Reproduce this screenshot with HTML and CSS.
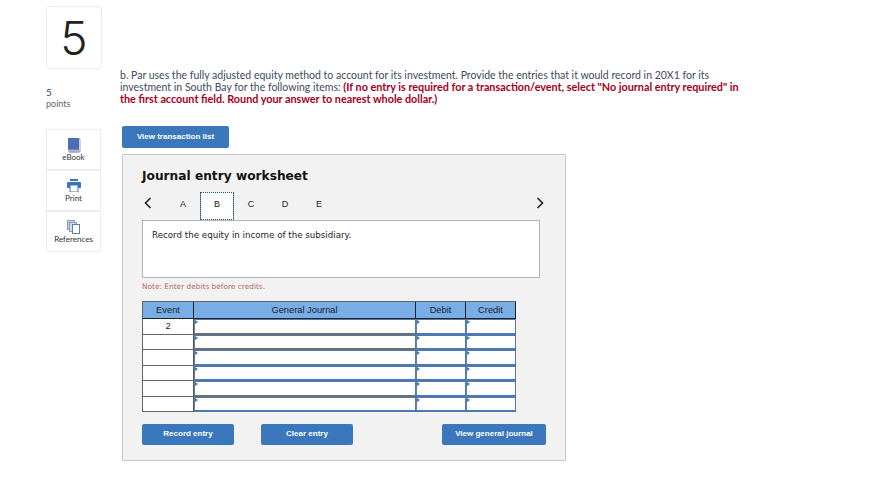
FILE: index.html
```html
<!DOCTYPE html>
<html lang="en">
<head>
    <meta charset="UTF-8">
    <title>Journal entry worksheet</title>
    <link rel="stylesheet" href="styles.css">
</head>
<body>
    <div class="page">
        <div class="sidebar">
            <div class="qnum">5</div>
            <div class="points"><b>5</b><span>points</span></div>
            <div class="tools">
                <div class="tool tool-book">
                    <svg width="14" height="15" viewBox="0 0 14 15"><rect x="1" y="0" width="11" height="12" fill="#4a6fb5"/><path d="M1 12h11v1H2v1h10M12 1h1v13H2" fill="none" stroke="#9aa0b4"/></svg>
                    <span>eBook</span>
                </div>
                <div class="tool">
                    <svg width="14" height="13" viewBox="0 0 14 13"><rect x="3" y="0" width="8" height="2" fill="#3a75bb"/><rect x="0" y="3" width="14" height="6" rx="1" fill="#3a75bb"/><rect x="3" y="6" width="8" height="7" fill="#fff" stroke="#3a75bb"/></svg>
                    <span>Print</span>
                </div>
                <div class="tool tool-refs">
                    <svg width="13" height="14" viewBox="0 0 13 14"><rect x="0.5" y="0.5" width="7" height="9" fill="#c3cbe6" stroke="#8f9cc4"/><rect x="2.5" y="2.5" width="7" height="9" fill="#d5dbef" stroke="#8f9cc4"/><rect x="5.5" y="4.5" width="7" height="9" fill="#fff" stroke="#5b7fae"/></svg>
                    <span>References</span>
                </div>
            </div>
        </div>

        <div class="main">
            <p class="prompt">b. Par uses the fully adjusted equity method to account for its investment. Provide the entries that it would record in 20X1 for its investment in South Bay for the following items: <strong>(If no entry is required for a transaction/event, select "No journal entry required" in the first account field. Round your answer to nearest whole dollar.)</strong></p>
            <button class="btn btn-list">View transaction list</button>

            <div class="worksheet">
                <h2>Journal entry worksheet</h2>
                <div class="tabs">
                    <svg class="chev" width="8" height="12" viewBox="0 0 8 12"><path d="M6.5 1L1.5 6l5 5" fill="none" stroke="#222" stroke-width="1.6"/></svg>
                    <div class="tab-list">
                        <span class="tab">A</span>
                        <span class="tab active">B</span>
                        <span class="tab">C</span>
                        <span class="tab">D</span>
                        <span class="tab">E</span>
                    </div>
                    <svg class="chev" width="8" height="12" viewBox="0 0 8 12"><path d="M1.5 1l5 5-5 5" fill="none" stroke="#222" stroke-width="1.6"/></svg>
                </div>
                <div class="record">Record the equity in income of the subsidiary.</div>
                <div class="note">Note: Enter debits before credits.</div>

                <div class="journal">
                    <div class="th">Event</div><div class="th">General Journal</div><div class="th">Debit</div><div class="th">Credit</div>

                    <div class="ev">2</div><div class="in grey"></div><div class="in"></div><div class="in"></div>
                    <div class="ev"></div><div class="in grey"></div><div class="in"></div><div class="in"></div>
                    <div class="ev"></div><div class="in"></div><div class="in"></div><div class="in"></div>
                    <div class="ev"></div><div class="in"></div><div class="in"></div><div class="in"></div>
                    <div class="ev"></div><div class="in grey"></div><div class="in"></div><div class="in"></div>
                    <div class="ev"></div><div class="in"></div><div class="in"></div><div class="in"></div>
                </div>

                <div class="actions">
                    <button class="btn btn-entry">Record entry</button>
                    <button class="btn btn-entry">Clear entry</button>
                    <button class="btn btn-view">View general journal</button>
                </div>
            </div>
        </div>
    </div>
</body>
</html>
```
FILE: styles.css
```css
* { box-sizing: border-box; }

body {
    margin: 0;
    background: #fff;
    color: #333;
    font-family: "Lato", sans-serif;
}

.page {
    display: flex;
    padding: 6px 0 0 46px;
}

.sidebar {
    width: 56px;
    margin-right: 18px;
    flex-shrink: 0;
}

.qnum {
    width: 56px;
    height: 63px;
    border: 1px solid #ececec;
    border-radius: 4px;
    display: flex;
    align-items: center;
    justify-content: center;
    font-size: 46px;
    color: #222;
    font-family: "Inter", sans-serif;
    font-weight: 300;
}

.points {
    margin-top: 18px;
    font-size: 9px;
    line-height: 11px;
    color: #666;
}

.points b {
    display: block;
    font-size: 10px;
    font-weight: 400;
    color: #2b4a78;
}

.tools {
    margin-top: 20px;
    width: 55px;
}

.tool {
    height: 41px;
    border: 1px solid #ececec;
    display: flex;
    flex-direction: column;
    align-items: center;
    padding-top: 8px;
    font-size: 8px;
    line-height: 10px;
    color: #333;
    gap: 1px;
}

.tool:last-child { border-radius: 0 0 3px 3px; }
.tool-book svg { margin-bottom: -2px; }
.tool-refs svg { margin-bottom: -1px; }

.main {
    width: 640px;
    padding-top: 63px;
}

.prompt {
    margin: 0;
    font-size: 10.5px;
    line-height: 12px;
    width: 625px;
    color: #3d4a5c;
}

.prompt strong {
    color: #a4001d;
    font-size: 10.8px;
    line-height: 12px;
    font-weight: 700;
}

.btn {
    background: #3b77bc;
    color: #fff;
    border: none;
    border-radius: 2px;
    font-family: "Liberation Sans", sans-serif;
    font-size: 8px;
    font-weight: 700;
    padding: 0 0 2px;
}

.btn-list {
    display: block;
    width: 107px;
    height: 22px;
    margin: 21px 0 6px 2px;
}

.worksheet {
    width: 444px;
    height: 307px;
    margin-left: 2px;
    background: #f2f2f2;
    border: 1px solid #c8c8c8;
    padding: 13px 19px 0 19px;
    font-family: "DejaVu Sans", sans-serif;
}

.worksheet h2 {
    margin: 0;
    font-size: 12.2px;
    line-height: 17px;
    color: #111;
    font-weight: 700;
}

.tabs {
    display: flex;
    align-items: center;
    justify-content: space-between;
    width: 403px;
    height: 28px;
    margin-top: 7px;
    padding: 0 1px 0 2px;
}

.tabs .chev { margin-top: -7px; }

.tab-list {
    display: flex;
    flex: 1;
    margin-left: 14px;
    height: 28px;
}

.tab {
    width: 34px;
    font-family: "Liberation Sans", sans-serif;
    font-size: 9px;
    line-height: 24px;
    text-align: center;
    color: #222;
}

.tab.active {
    background: #fff;
    outline: 1px dotted #1f4f8a;
    outline-offset: -1px;
    border-left: 1px solid #999;
    border-right: 1px solid #999;
}

.record {
    width: 398px;
    height: 58px;
    background: #fff;
    border: 1px solid #b5b5b5;
    padding: 8px 9px;
    font-size: 8.7px;
    line-height: 13px;
    color: #222;
}

.note {
    margin-top: 4px;
    font-size: 7.4px;
    line-height: 10px;
    color: #b5696a;
}

.journal {
    display: grid;
    grid-template-columns: 52px 222px 50px 50px;
    grid-template-rows: 17px repeat(6, 15.5px);
    width: 374px;
    margin-top: 9px;
    border-top: 1px solid #666;
    font-family: "Liberation Sans", sans-serif;
    font-size: 9.3px;
}

.th {
    background: #78ade6;
    color: #222;
    text-align: center;
    line-height: 16px;
    border-right: 1px solid #222;
    border-bottom: 1px solid #222;
}

.th:first-child { border-left: 1px solid #666; }

.ev {
    background: #fff;
    text-align: center;
    line-height: 15px;
    color: #222;
    border-left: 1px solid #666;
    border-right: 1px solid #555;
    border-bottom: 1px solid #666;
}

.in {
    position: relative;
    background: #fff;
    border: 1px solid #4f78b0;
    border-bottom-width: 2px;
    border-left-color: #6b7f99;
}

.in.grey { border-bottom-color: #6f6f6f; }

.in::before {
    content: "";
    position: absolute;
    top: 0;
    left: 0;
    border-left: 3px solid #3b77bc;
    border-top: 2px solid transparent;
    border-bottom: 2px solid transparent;
}

.actions {
    display: flex;
    width: 404px;
    margin-top: 12px;
}

.btn-entry {
    width: 92px;
    height: 21px;
    margin-right: 27px;
}

.btn-view {
    width: 104px;
    height: 21px;
    margin-left: auto;
}
```
